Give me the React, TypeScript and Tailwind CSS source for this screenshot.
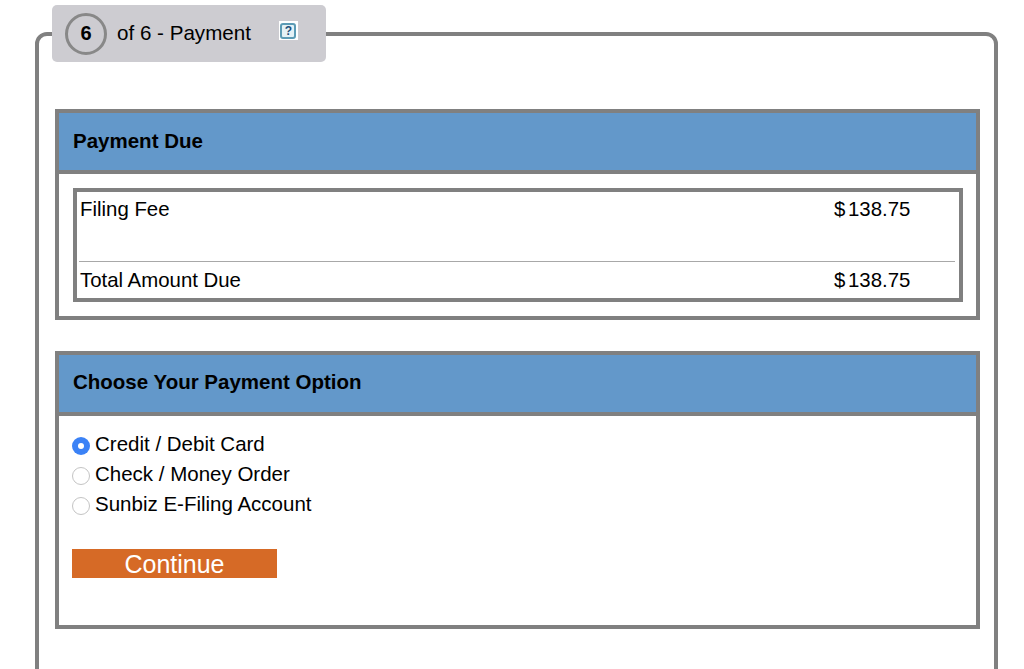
import React from 'react';

function Panel({ title, className, titleClass, children }: { title: string; className: string; titleClass: string; children: React.ReactNode }) {
  return (
    <section className={`border-4 border-[#808080] ${className}`}>
      <div className="h-[61px] border-b-4 border-[#808080] bg-[#6398ca] pl-[14px]">
        <h2 className={`text-[20.5px] leading-[24px] font-bold text-black ${titleClass}`}>{title}</h2>
      </div>
      {children}
    </section>
  );
}

function FeeRow({ label, amount }: { label: string; amount: string }) {
  return (
    <div className="flex pl-[1px] text-[20.4px] leading-[23px] text-black">
      <span className="w-[754px]">{label}</span>
      <span className="flex">
        <span className="w-[14px]">$</span>
        {amount}
      </span>
    </div>
  );
}

function Radio({ label, checked }: { label: string; checked?: boolean }) {
  return (
    <div className="flex h-[30px] items-start text-[20.5px] leading-[23px] text-black">
      {checked ? (
        <span className="mt-[5px] mr-[5px] flex h-[18px] w-[18px] items-center justify-center rounded-full bg-[#3b82f6]">
          <span className="h-[6px] w-[6px] rounded-full bg-white" />
        </span>
      ) : (
        <span className="mt-[5px] mr-[5px] h-[18px] w-[18px] rounded-full border border-[#c4c4c4] bg-white" />
      )}
      {label}
    </div>
  );
}

function HelpIcon() {
  return (
    <span className="flex h-[19px] w-[19px] items-center justify-center bg-white">
      <span className="flex h-[16px] w-[16px] items-center justify-center rounded-[3px] border-2 border-[#5c9bb5] bg-[#e4f1f6] text-[12px] leading-none font-bold text-[#1d4f7a]">
        ?
      </span>
    </span>
  );
}

export default function App() {
  return (
    <div className="h-[669px] w-[1024px] overflow-hidden bg-white pt-[5px] pl-[35px] font-['Liberation_Sans',Arial,sans-serif]">
      <fieldset className="h-[700px] w-[963px] rounded-[12px] border-4 border-[#808080] pr-[14px] pl-[16px]">
        <legend className="-ml-[3px] flex h-[57px] w-[274px] items-center rounded-[5px] bg-[#cdccd1] pl-[13px]">
          <span className="flex h-[42px] w-[42px] items-center justify-center rounded-full border-[3px] border-[#888888] pb-[1px] text-[20px] font-bold text-black">
            6
          </span>
          <span className="ml-[10px] text-[20.6px] text-black">of 6 - Payment</span>
          <span className="ml-[28px] -mt-[6px]">
            <HelpIcon />
          </span>
        </legend>

        <div className="mt-[47px] flex flex-col gap-[31px]">
          <Panel title="Payment Due" titleClass="pt-[16px]" className="h-[211px]">
            <div className="mt-[14px] mr-[13px] ml-[14px] h-[114px] border-4 border-[#808080] px-[2px] pt-[6px]">
              <FeeRow label="Filing Fee" amount="138.75" />
              <div className="mt-[40px] mr-[2px] border-t border-[#a8a8a8] pt-[7px]">
                <FeeRow label="Total Amount Due" amount="138.75" />
              </div>
            </div>
          </Panel>

          <Panel title="Choose Your Payment Option" titleClass="pt-[15px]" className="h-[278px]">
            <div className="pt-[16px] pl-[13px]">
              <Radio label="Credit / Debit Card" checked />
              <Radio label="Check / Money Order" />
              <Radio label="Sunbiz E-Filing Account" />
              <button className="mt-[27px] h-[29px] w-[205px] bg-[#d66a26] pt-[2px] text-[25px] leading-none text-white">
                Continue
              </button>
            </div>
          </Panel>
        </div>
      </fieldset>
    </div>
  );
}
